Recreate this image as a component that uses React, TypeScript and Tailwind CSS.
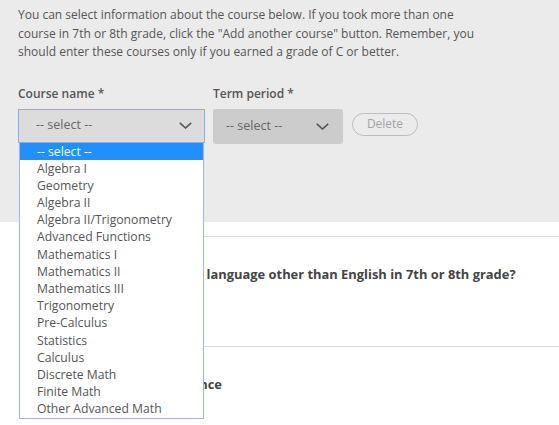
const courses = [
  '-- select --',
  'Algebra I',
  'Geometry',
  'Algebra II',
  'Algebra II/Trigonometry',
  'Advanced Functions',
  'Mathematics I',
  'Mathematics II',
  'Mathematics III',
  'Trigonometry',
  'Pre-Calculus',
  'Statistics',
  'Calculus',
  'Discrete Math',
  'Finite Math',
  'Other Advanced Math',
];

const font = { fontFamily: '"Open Sans", "Noto Sans", sans-serif' };

function Chevron() {
  return (
    <svg width="13" height="7" viewBox="0 0 13 7" fill="none" className="shrink-0">
      <polyline points="0.8,0.8 6.5,6 12.2,0.8" stroke="#555" strokeWidth="1.6" />
    </svg>
  );
}

export default function App() {
  return (
    <div className="w-[559px] h-[425px] overflow-hidden bg-white" style={font}>
      <section className="bg-[#ebebeb] h-[222px] px-[18px] pt-[6px]">
        <p className="text-[12px] leading-[18.5px] text-[#555] whitespace-nowrap">
          You can select information about the course below. If you took more than one
          <br />
          course in 7th or 8th grade, click the "Add another course" button. Remember, you
          <br />
          should enter these courses only if you earned a grade of C or better.
        </p>

        <div className="mt-[23px] flex items-start">
          <div className="relative w-[187px]">
            <label className="block text-[12px] leading-[18px] text-[#555] font-semibold">Course name *</label>
            <div className="mt-[6px] h-[34px] border border-[#7fb2f0] bg-[#dcdcdc] flex items-center justify-between pl-[17px] pr-[12px]">
              <span className="text-[12.5px] text-[#666]">-- select --</span>
              <Chevron />
            </div>
            <ul className="absolute left-[1px] top-[58px] w-[185px] bg-white border border-[#a4b6d6] border-t-0 z-10 text-[12.2px] text-[#555]">
              {courses.map((c, i) => (
                <li
                  key={c}
                  className={
                    i === 0
                      ? 'h-[17.2px] leading-[17.2px] pl-[17px] bg-[#1e90ff] text-white'
                      : 'h-[17.2px] leading-[17.2px] pl-[17px]'
                  }
                >
                  {c}
                </li>
              ))}
            </ul>
          </div>

          <div className="ml-[8px] w-[130px]">
            <label className="block text-[12px] leading-[18px] text-[#555] font-semibold">Term period *</label>
            <div className="mt-[6px] h-[35px] rounded-[3px] bg-[#cccccc] flex items-center justify-between pl-[13px] pr-[14px]">
              <span className="text-[12.5px] text-[#666]">-- select --</span>
              <Chevron />
            </div>
          </div>

          <button className="ml-[9px] mt-[28px] h-[23px] w-[66px] rounded-full border border-[#bdbdbd] text-[12px] text-[#a3a3a3]">
            Delete
          </button>
        </div>
      </section>

      <section className="ml-[22px] mt-[14px] border-t border-[#dcdcdc] h-[110px] pt-[28px]">
        <h3 className="text-[12.9px] leading-[18px] font-bold text-[#444]">
          Did you take any course in a language other than English in 7th or 8th grade?
        </h3>
      </section>
      <section className="ml-[22px] border-t border-[#dcdcdc] h-[75px] pt-[28px]">
        <h3 className="text-[12.9px] leading-[18px] font-bold text-[#444]">Other middle grade experience</h3>
      </section>
    </div>
  );
}
